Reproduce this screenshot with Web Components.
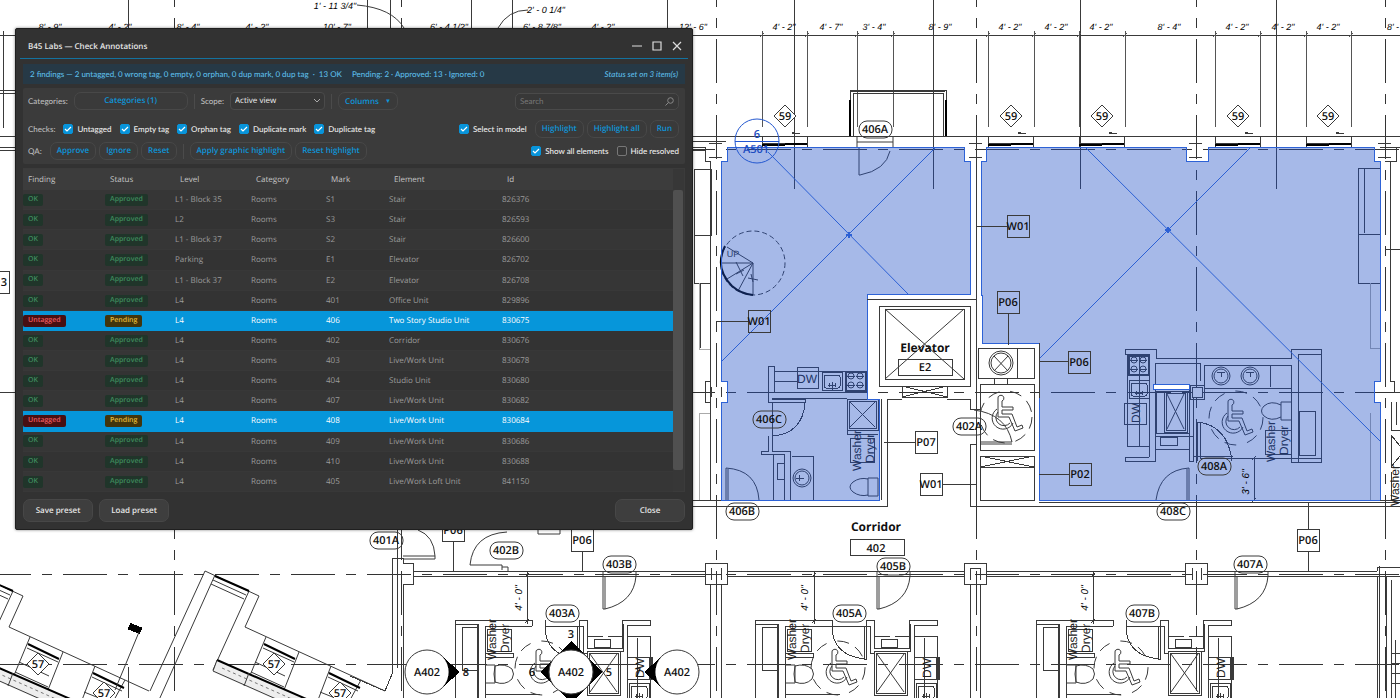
<!DOCTYPE html>
<html lang="en">
<head>
<meta charset="utf-8">
<title>B45 Labs — Check Annotations</title>
<style>
html,body{margin:0;height:100%;background:#fff;overflow:hidden}
body{font-family:"Open Sans","Noto Sans",sans-serif;text-rendering:geometricPrecision}
</style>
</head>
<body>
<plan-desktop>
  <floor-plan></floor-plan>
  <tool-window slot="window" heading="B45 Labs — Check Annotations">
    <status-strip>
      2 findings — 2 untagged, 0 wrong tag, 0 empty, 0 orphan, 0 dup mark, 0 dup tag &nbsp;·&nbsp; 13 OK
      <span slot="counts">Pending: 2 · Approved: 13 · Ignored: 0</span>
      <span slot="note">Status set on 3 item(s)</span>
    </status-strip>
    <filter-panel></filter-panel>
    <findings-table></findings-table>
    <push-button slot="footer" kind="solid">Save preset</push-button>
    <push-button slot="footer" kind="solid">Load preset</push-button>
    <push-button slot="close" kind="solid">Close</push-button>
  </tool-window>
</plan-desktop>
<script>
const define = (name, html, init) => customElements.define(name, class extends HTMLElement {
  connectedCallback() {
    if (this.shadowRoot) return;
    const root = this.attachShadow({ mode: 'open' });
    root.innerHTML = typeof html === 'function' ? html(this) : html;
    if (init) init(this, root);
  }
});

define('plan-desktop', `<style>
:host{display:block;position:relative;min-height:100vh;overflow:hidden;background:#fff}
.over{position:absolute;left:15px;top:28px;width:678px;max-width:calc(100% - 30px)}
</style><slot></slot><div class="over"><slot name="window"></slot></div>`);

define('tool-window', el => `<style>
:host{display:block}
.win{box-sizing:border-box;background:#323232;border:1px solid #1f1f1f;border-radius:2px;box-shadow:0 0 3px rgba(0,0,0,.5);color:#ddd}
header{display:flex;align-items:center;height:29px;margin:0 4px;padding:0 1px 0 8px;border-bottom:1px solid #14729f}
h1{flex:1;margin:0;font-size:8px;line-height:12px;font-weight:600;color:#e6e6e6;padding-top:6px}
.ctl{appearance:none;border:0;background:none;padding:0;width:20px;height:16px;margin-top:4px;display:grid;place-items:center;color:#ddd}
main{display:flex;flex-direction:column;gap:4px;padding:5px 7px 0}
footer{display:flex;gap:6px;padding:7px}
.grow{flex:1}
</style><section class="win">
<header><h1>${el.getAttribute('heading')}</h1>
<button class="ctl" aria-label="Minimize"><svg width="10" height="10"><path d="M0 5h10" stroke="currentColor"/></svg></button>
<button class="ctl" aria-label="Maximize"><svg width="10" height="10"><path d="M1 1h8v8h-8z" fill="none" stroke="currentColor" stroke-width="1.2"/></svg></button>
<button class="ctl" aria-label="Close window"><svg width="10" height="10"><path d="M1 1l8 8M9 1l-8 8" stroke="currentColor" stroke-width="1.2"/></svg></button>
</header>
<main><slot></slot></main>
<footer><slot name="footer"></slot><span class="grow"></span><slot name="close"></slot></footer></section>`);

define('status-strip', `<style>
:host{display:flex;align-items:center;height:20px;padding:0 7px;background:#263946;color:#5cbce6;font:500 8px/12px Lato,"Open Sans",sans-serif;white-space:nowrap}
.c{margin-left:10px;flex:1}.n{font-style:italic}
</style><span><slot></slot></span><span class="c"><slot name="counts"></slot></span><span class="n"><slot name="note"></slot></span>`);

define('push-button', `<style>
:host{display:block}
button{display:block;font:600 8px/12px "Open Sans","Noto Sans",sans-serif;text-rendering:inherit;box-sizing:border-box;height:18px;width:100%;padding:0 6px;border:1px solid #484848;border-radius:7px;background:#3a3a3a;color:#0d96da;white-space:nowrap}
:host([kind=solid]) button{height:23px;width:70px;padding:0;border-color:#474747;background:#3e3e3e;color:#e4e4e4}
</style><button type="button"><slot></slot></button>`);

define('check-box', el => `<style>
:host{display:block}
label{display:flex;align-items:center;gap:4px;font-size:8px;line-height:12px;color:#ececec;white-space:nowrap}
input{appearance:none;box-sizing:border-box;width:10px;height:10px;margin:0;border:1px solid #777;border-radius:2px;background:#383838;flex:none}
input:checked{border-color:#0894da;background:#0894da}
span.box{display:grid}.box>*{grid-area:1/1}svg{pointer-events:none}
input:not(:checked)+svg{display:none}
</style><label><span class="box"><input type="checkbox" ${el.hasAttribute('on') ? 'checked' : ''}><svg width="10" height="10"><path d="M2 5l2 2 4-4" fill="none" stroke="#fff" stroke-width="1.2"/></svg></span><span><slot></slot></span></label>`);

define('v-rule', `<style>:host{display:block;width:1px;height:15px;background:#4b4b4b}</style>`);

define('filter-panel', `<style>
:host{display:flex;flex-direction:column;gap:4px;background:#3b3b3b;border-radius:2px;padding:4px 6px 3px 5px;font:500 8px/12px Lato,"Open Sans",sans-serif;color:#bcbcbc;height:69px}
.row{display:flex;align-items:center;height:18px;white-space:nowrap}
.row.first{margin-bottom:6px}
.grow{flex:1}
.a{gap:6px}.b{gap:8px}.c{gap:3px}
.cat{width:114px}
.sel{position:relative;display:flex;align-items:center}
select{appearance:none;box-sizing:border-box;width:95px;height:18px;border:1px solid #4a4a4a;border-radius:4px;background:#373737;color:#f0f0f0;font:8px/12px "Open Sans","Noto Sans",sans-serif;text-rendering:inherit;padding:0 4px}
.sel svg{position:absolute;right:5px}
.search{box-sizing:border-box;display:flex;align-items:center;width:164px;height:17px;border:1px solid #4a4a4a;border-radius:5px;background:#383838;padding:0 4px;color:#777}
input{appearance:none;flex:1;min-width:0;border:0;padding:0;background:none;outline:none;font:8px/12px Lato,"Open Sans",sans-serif;text-rendering:inherit;color:#ddd}
input::placeholder{color:#777;opacity:1}
.tri{font-size:6px;margin-left:4px;vertical-align:1px}
</style>
<div class="row first a"><span>Categories:</span><push-button class="cat">Categories (1)</push-button><v-rule></v-rule>
<label for="scope">Scope:</label><span class="sel"><select id="scope"><option>Active view</option></select><svg width="6" height="4"><path d="M0 0l3 3 3-3" fill="none" stroke="#aaa"/></svg></span><v-rule></v-rule>
<push-button>Columns <span class="tri">▼</span></push-button><span class="grow"></span>
<span class="search"><input type="search" placeholder="Search" aria-label="Search"><svg width="9" height="9"><circle cx="5.500" cy="3.500" r="2.800" fill="none" stroke="#888"/><path d="M3.500 5.500L.5 8.500" stroke="#888"/></svg></span></div>
<div class="row b"><span>Checks:</span><check-box on>Untagged</check-box><check-box on>Empty tag</check-box><check-box on>Orphan tag</check-box><check-box on>Duplicate mark</check-box><check-box on>Duplicate tag</check-box><span class="grow"></span><check-box on>Select in model</check-box><div class="row c"><push-button>Highlight</push-button><push-button>Highlight all</push-button><push-button>Run</push-button></div></div>
<div class="row b"><span>QA:</span><div class="row a"><div class="row c"><push-button>Approve</push-button><push-button>Ignore</push-button><push-button>Reset</push-button></div><v-rule></v-rule><div class="row c"><push-button>Apply graphic highlight</push-button><push-button>Reset highlight</push-button></div></div><span class="grow"></span><check-box on>Show all elements</check-box><check-box>Hide resolved</check-box></div>`);

const findings = [
['L1 - Block 35','S1','Stair','826376'],['L2','S3','Stair','826593'],['L1 - Block 37','S2','Stair','826600'],
['Parking','E1','Elevator','826702'],['L1 - Block 37','E2','Elevator','826708'],['L4','401','Office Unit','829896'],
['L4','406','Two Story Studio Unit','830675',1],['L4','402','Corridor','830676'],['L4','403','Live/Work Unit','830678'],
['L4','404','Studio Unit','830680'],['L4','407','Live/Work Unit','830682'],['L4','408','Live/Work Unit','830684',1],
['L4','409','Live/Work Unit','830686'],['L4','410','Live/Work Unit','830688'],['L4','405','Live/Work Loft Unit','841150']];

define('findings-table', () => `<style>
:host{display:flex;border:1px solid #3b3b3b;border-left:0;background:#323232;height:322px}
table{flex:1;height:323px;border-collapse:collapse;table-layout:fixed;font-size:8px;line-height:12px;color:#9c9c9c}
th{height:21px;padding:0 0 0 5px;background:#3c3c3c;text-align:left;font-weight:400;color:#c6c6c6}
td{padding:0;white-space:nowrap}
tbody tr{background:#333;box-shadow:inset 0 -1px #383838}
tbody tr:nth-child(odd){background:#363636}
tbody tr.sel{background:#0696da;color:#fff;font-weight:500;box-shadow:none}
b{display:inline-block;vertical-align:middle;font-size:7px;line-height:12px;font-weight:600;padding:0 5px;border-radius:2px;background:#20352a;color:#3f8c5e}
.sel b{background:#470f12;color:#ee5b60}.sel td+td b{background:#42350c;color:#e6bd3a}
.bar{width:11px;background:#373737;padding-top:21px}
.thumb{width:10px;height:280px;background:#505050;border-radius:2px}
</style><table><colgroup><col width="82"><col width="70"><col width="76"><col width="75"><col width="63"><col width="113"><col></colgroup>
<thead><tr><th>Finding<th>Status<th>Level<th>Category<th>Mark<th>Element<th>Id</tr></thead>
<tbody>${findings.map(f => `<tr${f[4] ? ' class="sel"' : ''}><td><b>${f[4] ? 'Untagged' : 'OK'}</b><td><b>${f[4] ? 'Pending' : 'Approved'}</b><td>${f[0]}<td>Rooms<td>${f[1]}<td>${f[2]}<td>${f[3]}</tr>`).join('')}</tbody></table>
<div class="bar"><div class="thumb"></div></div>`);

/* ---- drawing helpers ---- */
const P = (d, c = '') => `<path d="${d}" class="${c}"/>`;
const R = (x, y, w, h, c = '') => `<rect x="${x}" y="${y}" width="${w}" height="${h}" class="${c}"/>`;
const C = (x, y, r, c = '') => `<circle cx="${x}" cy="${y}" r="${r}" class="${c}"/>`;
const T = (x, y, t, c = 't') => `<text x="${x}" y="${y}" class="${c}">${t}</text>`;
const V = (x, y, t, c = 'w') => `<text transform="translate(${x} ${y}) rotate(-90)" class="${c}">${t}</text>`;
const pill = (x, y, t) => `<rect x="${x - 16}" y="${y - 8}" width="33" height="17" rx="8" class="s"/>` + T(x, y + 4, t);
const box = (x, y, t) => R(x - 11, y - 11, 22, 22) + T(x, y + 4, t);
const gem = (x, y, t) => P(`M${x} ${y - 11}l11 11l-11 11l-11-11z`, 's wh') + T(x, y + 4, t);
const chair = (x, y) => `<g transform="translate(${x} ${y})" class="s">` +
  P('M-5-19a3 3 0 1 1 4 2l0 6h11v3h-11v4h10l5 13l5-2l1 3l-8 3l-6-14h-11v-18') +
  P('M-6-9a11 11 0 1 0 16 14M-5-6a8 8 0 1 0 12 11') + '</g>';
const ring = (x, y, r = 27) => `<circle cx="${x}" cy="${y}" r="${r}" class="s" stroke-dasharray="12 7 12 11"/>`;
const stove = (x, y) => R(x, y, 21, 20) + R(x + 1, y + 1, 19, 18) + [[6,5],[15,5],[6,14],[15,14]].map(p => C(x + p[0], y + p[1], 3, 's') + P(`M${x + p[0] - 4} ${y + p[1]}h8`)).join('');
const sink = (x, y) => R(x, y, 20, 18) + `<rect x="${x + 2}" y="${y + 3}" width="16" height="13" rx="2"/>` + P(`M${x + 10} ${y + 10}v8M${x + 6} ${y + 13}h8M${x + 7} ${y + 11}v4M${x + 13} ${y + 11}v4`);
const shower = (x, y, w, h) => R(x, y, w, h) + R(x + 2, y + 2, w - 4, h - 4) + P(`M${x + 3} ${y + 3}L${x + w - 3} ${y + h - 3}M${x + w - 3} ${y + 3}L${x + 3} ${y + h - 3}`, 's');

const dims = [[50,"8' - 9\""],[120,"4' - 2\""],[188,"8' - 4\""],[257,"4' - 2\""],[337,"10' - 7\""],[449,"6' - 4 1/2\""],[542,"6' - 8 7/8\""],[603,"4' - 2\""],[693,"12' - 6\""],[784,"4' - 2\""],[831,"4' - 7\""],[874,"3' - 4\""],[940,"8' - 9\""],[1010,"4' - 2\""],[1056,"4' - 2\""],[1101,"4' - 2\""],[1169,"8' - 4\""],[1237,"4' - 2\""],[1283,"4' - 2\""],[1328,"4' - 2\""],[1393,"8' -"]];
const ticks = [762,807,857,893,988,1034,1079,1125,1215,1260,1306,1351];

/* window wing of the angled block at the lower left */
const wing = dx => `<g transform="translate(${dx} 0)" class="s">` +
  P('M205 571L259 596L245 627L385 691M205 571L150 691M215 575L159 700M249 591L213 670M211 584L244 599M213 580L246 595M266 637L246 685M299 652L280 700M331 666L318 700M361 680L350 700') +
  P('M215 576L249 591M264 644L295 659M329 673L360 688', 'k') +
  P('M263 648L294 662M328 677L358 691M255 662L285 676M320 692L340 700M251 672L284 687') +
  P('M217 660L213 672L310 715L314 703z', 'band') + P('M217 660L320 705', 'k') + P('M222 668L310 707', 'd') +
  P('M213 671L310 714M217 660L213 671M249 673L244 686') + gem(274, 664, '57') + gem(340, 693, '57') + '</g>';

/* left half of a bathroom: closet, washer, toilet */
const bathL = dx => `<g transform="translate(${dx} 0)">` +
  P('M755 700V620H832V626M755 624H778V700M777 624V700M785 700V626H832M762 627H778M762 627V670H778M785 653H813V657H785M785 694H840') +
  R(787, 629, 24, 22) + P('M785 665h10v18h-10M795 666q-2 8 0 16q10 4 17-3q3-5 0-10q-7-6-17-3', 's') +
  V(796, 660, 'Washer') + V(809, 653, 'Dryer') + '</g>';
/* right half: door, shower, dishwasher */
const bathR = dx => `<g transform="translate(${dx} 0)">` +
  P('M832 620V626M866 626H870V653H874M864 626V659M866 626V659H864Q832 655 832 626H866V620H874V648H909V620H937V625H914V700M910 624V651H874M937 636V700M874 636H890M895 636H909M914 636H937M924 638V700') +
  R(881, 639, 16, 8) + shower(874, 651, 33, 44) + R(914, 657, 24, 22) + R(936, 657, 3, 22) + V(931, 678, 'DW') + sink(916, 683) + '</g>';

define('floor-plan', () => `<style>
:host{display:block;height:100vh;min-height:100%}
svg{display:block;width:100%;height:100%}
path,rect,circle{fill:none;stroke:#3a3a3a;stroke-width:1;shape-rendering:crispEdges}
.s,.s path,.s rect,.s circle{shape-rendering:auto}
.k{stroke:#000;stroke-width:2}
.g{stroke:#aaa}
.e{stroke:#555}
.dash{stroke-dasharray:5 3}
.band{fill:#eee;stroke:none}
.d{stroke:#777;stroke-dasharray:3 3}
.grid{stroke:#333;stroke-dasharray:44 11 10 11}
.room{fill:rgb(32,80,197);fill-opacity:.4;stroke:#2d62d6}
.x{stroke:#2c60d4;shape-rendering:auto}
.fill{fill:#000;stroke:none}
.wh{fill:#fff}
text{fill:#111;stroke:none;font:600 11px "Open Sans","Noto Sans",sans-serif;text-anchor:middle}
text.n{font:italic 9px "Liberation Sans",sans-serif;fill:#000}
text.v{font-size:10px}
text.up{font:9px "Liberation Sans",sans-serif;fill:#333}
text.w{font:12px "Liberation Sans",sans-serif;text-anchor:start;fill:#222}
text.r{font-weight:700;font-size:12px}
text.b{fill:#1c4cc0}
</style>
<svg viewBox="0 0 1400 698" preserveAspectRatio="xMinYMin slice" role="img" aria-label="Floor plan">
${[174,401,716,976,1196,1385].map(x => P(`M${x} -37V700`, 'grid')).join('')}
${[149,392,574,664].map(y => P(`M${y === 149 ? 671 : -13} ${y}H1400`, 'grid')).join('')}
${P('M0 35H1400M3 31V128M128 0V28M128 667V700M367 0V28M390 0V28M471 0V28M512 0V28M667 0V28M794 0V189M933 0V189M1080 0V189M1276 0V189')}
${P('M0 90H15M0 93H15M0 136H15M0 147H15M0 150H15M0 392H15')}
${P('M357 5Q392 8 404 28M498 28Q508 10 528 10', 's')}
${ticks.map(x => P(`M${x} 31V127M${x - 2} 37L${x + 2} 33`, 'e')).join('')}
${dims.map(d => T(d[0], 30, d[1], 'n')).join('')}
${T(335, 9, "1' - 11 3/4\"", 'n')}${T(546, 13, "2' - 0 1/4\"", 'n')}
${P('M692 136H1400M692 141H726')}${P('M692 147H705V161H710V500M692 150H705')}
${[762,988,1079,1215,1306].map(x => P(`M${x} 136V147M${x + 45} 136V147M${x} 147H${x + 45}M${x} 143H${x + 45}`) + P(`M${x} 145H${x + 23}M${x + 23} 144H${x + 45}`, 'k') + P(`M${x + 30} 133H${x + 38}M${x + 30} 133l3-1`)).join('')}
${[716,976,1196,1385].map(x => P(`M${x - 7} 143h13M${x - 7} 157h13`)).join('')}
${P('M850 136V90H946V136M853 136V93H943V136M851 91H945')}${P('M850 100V136M946 100V136', 'k')}
${P('M857 136V147M893 136V147M857 142H893M859 147V175H860Q886 170 890 151', 's')}
${R(694,169,17,66)}${P('M700 283H710M694 234V283H711M700 348V283')}${P('M699 283V349H710M699 500V413H710', 'g')}
${P('M710 381H705V402H710M711 387V397M721 387V397')}
<!-- 406 -->
${C(753,263,32,'s dash')}${P('M753 263L721 263M753 263L727 279M753 263L738 291M753 263L753 295M753 263L727 247', 's')}${P('M725 246Q714 268 732 286Q741 294 753 295', 'k s')}${P('M736 262l7 14M736 274l8-4M748 278l10 2M751 274l2 8','s')}${T(733,257,'UP','up')}
${P('M768 402V366H774V392M768 402H774M774 371H867M774 392H867M772 398H847M774 381H797')}
${R(797,367,21,21)}${T(797,383,'DW','w')}${sink(822,372)}${stove(845,371)}
${P('M772 399H805V402H772V436M805 402Q803 434 772 436M768 436V451H761V454H784V500M772 436V451H790V500M792 456H813V500M773 454V500')}
${shower(847,399,31,31)}${P('M847 430V434H878M879 412V500')}${P('M850 438H874V462H850z')}${V(861,471,'Washer')}${V(874,463,'Dryer')}
${R(777,463,7,16)}${C(802,478,9,'s')}${C(802,478,7,'s')}${P('M796 478h8M799 475v6')}
${P('M868 478h10v18h-10zM868 479q-8-2-15 3q-6 5 0 10q7 5 15 3','s')}
${P('M726 500V468Q757 470 759 500M728 469V500', 's')}
<!-- 408 -->
${P('M1039 361H1068M1125 355V349H1156V358H1291V349H1321V462H1291M1321 354H1298V462M1127 355H1149V358M1125 354H1149V457M1155 363V461H1125V457H1149M1156 363H1200V381M1321 458H1298M1204 365H1291V388H1204zM1291 365V462M1270 365V387')}
${stove(1128,355)}${P('M1127 355V446H1149')}${sink(1129,380)}${R(1124,403,22,21)}${V(1140,423,'DW')}${P('M1139 355V446')}
${R(1156,391,33,42)}${shower(1164,391,23,41)}${P('M1193 398V456H1233M1197 422V461M1189 390V456M1155 436H1193V461H1189V436M1155 449H1189')}
${R(1160,437,17,8)}${R(1190,385,14,14)}${R(1192,387,10,10)}
${[1221,1250].map(x => C(x,376,9,'s') + C(x,376,7,'s') + P(`M${x-4} 372h8M${x} 372v5`)).join('')}
${P('M1198 422Q1228 426 1232 461M1200 422V458H1321')}${R(1299,411,16,44)}${R(1265,430,26,24)}${V(1275,462,'Washer')}${V(1288,455,'Dryer')}
${P('M1291 402h-10v18h10M1281 405q-10-5-17 1q-5 5 0 10q7 6 17 1','s')}${chair(1233,422)}${ring(1236,418)}
${R(1358,168,22,66)}${P('M1364 168V233M1358 234V283H1380')}${P('M1370 283V348H1380M1370 413V500', 'g')}
${P('M1189 500V468Q1160 470 1156 500M1187 469V500','s')}
${P('M1254 458V500M1252 460l4-4M1252 502l4-4')}
<path class="room" d="M727 147H964V161H970V294H867V399H879V500H721V402H727V381H721V161H727z"/>
<path class="room" d="M986 147H1186V161H1208V147H1374V161H1380V381H1374V402H1380V500H1039V343H982V295H981V161H986z"/>
<path class="x" d="M768 152L908 294M936 147L721 362M1086 148L1380 441M1251 147L1039 359"/>
<path class="x" style="stroke-width:2" d="M846 235h6M849 232v6M1165 230h6M1168 227v6"/>
<rect x="1153" y="384" width="36" height="5" style="fill:#fff;stroke:#2d62d6"/>
<!-- lift core -->
${P('M867 299H976M976 147V500')}${R(879,306,91,80)}${R(885,309,79,70)}${P('M885 309L964 379M964 309L885 379','s')}
${P('M902 386H947V397H902zM902 386L947 397M947 386L902 397M887 399H902M947 399H970V409H981M887 399V506H692M881 500V399M692 500H721')}
${R(978,348,56,30)}${P('M1017 348V378M994 378V384M1007 378V384')}${C(1001,363,12,'s')}${C(1001,363,10,'s')}${P('M994 356L1008 371M1008 356L994 371','s')}
${R(980,384,54,66)}${R(980,456,54,44)}${P('M980 467H1034M980 456L1034 467M1034 456L980 467M976 444H970V506H1400M1039 502H1400M1039 398V343')}
${chair(1003,418)}${ring(1006,417,26)}${P('M974 410Q1006 414 1012 442H980M980 444H1012','s')}
${R(898,359,54,16)}${T(925,352,'Elevator','t r')}${T(925,371,'E2')}
${R(850,539,54,16)}${T(876,531,'Corridor','t r')}${T(876,552,'402')}
${P('M1380 147H1400M1385 161H1390V381M1396 147V161H1390M1390 283V235M1385 249H1400M1390 381H1394V392H1400M1391 402V430H1400M1391 435V467H1400M1391 435L1400 446M1391 467L1400 456M1391 472V500M1380 500H1400M1396 402V425')}
${V(1399,506,'Washer')}
<!-- lower band -->
${wing(-236)}${wing(0)}
<path class="k" style="stroke-width:7" d="M129 626L141 631"/>${P('M139 632L115 690','s')}
${P('M413 571H705M413 576H705M727 571H964M727 576H964M986 571H1185M986 576H1185M1207 571H1377M1207 576H1400')}
${P('M403 558H392V674L385 691M397 558V668M403 700V584H413V563H403V558M397 530V558M401 530V558M385 691L350 676')}
${[705,964,1185].map(x => R(x,563,22,21)).join('')}
${P('M711 568V580M721 568V580M711 574H721M970 568V580M980 568V580M970 568H980M1192 568V580M1201 568V580')}
${P('M710 584V700M721 584V700M970 584V700M980 584V700M1377 576V700M1379 566V700M1377 571V567H1400M1391 580V700M1395 640V700M1391 653H1400M1391 663H1400M1391 673H1400M1391 683H1400M1386 576V700')}
${P('M403 559H435V556H403M435 556Q434 536 418 530M470 565L502 565V570M470 565Q473 534 507 532M502 567H508V571M538 530V534H560V530', 's')}
${[[603,636],[877,910],[1235,1268]].map(([a,b]) => P(`M${a} 576V609H${a+2}V576M${a+2} 609Q${b-2} 602 ${b} 576M${a} 571V576M${b} 571V576`,'s')).join('')}
${[527,814,1093].map(x => P(`M${x} 572V624M${x-2} 577l4-4M${x-2} 623l4-4`)).join('')}
${V(522,598,"4' - 0\"",'n v')}${V(808,598,"4' - 0\"",'n v')}${V(1088,598,"4' - 0\"",'n v')}${V(1249,482,"3' - 6\"",'n v')}
${bathL(-300)}${bathL(0)}${bathL(281)}${bathR(-287)}${bathR(0)}${bathR(294)}
${[541,837,1120].map(x => chair(x,672) + ring(x+1,668)).join('')}
${P('M582 551V571M453 541V571M1308 502V529M1308 551V571M1039 474H1069M1039 361H1068M976 226H1007M716 321H748M884 442H915M942 484H976M1008 313V345')}
${gem(785,116,'59')}${gem(1011,116,'59')}${gem(1102,116,'59')}${gem(1238,116,'59')}${gem(1328,116,'59')}
${[[875,129,'406A'],[769,419,'406C'],[742,511,'406B'],[969,426,'402A'],[1214,466,'408A'],[1173,511,'408C'],[386,540,'401A'],[506,550,'402B'],[619,564,'403B'],[562,613,'403A'],[893,566,'405B'],[849,613,'405A'],[1250,564,'407A'],[1142,613,'407B']].map(a => pill(...a)).join('')}
${[[1018,226,'W01'],[759,321,'W01'],[1008,302,'P06'],[926,442,'P07'],[931,484,'W01'],[1079,362,'P06'],[1080,474,'P02'],[1308,540,'P06'],[582,540,'P06'],[453,530,'P06']].map(a => box(...a)).join('')}${R(-13,271,22,22)}${T(4,286,'3')}
<circle cx="757" cy="141" r="22" style="stroke:#2458d0;shape-rendering:auto"/><path d="M735 141h44" style="stroke:#2458d0"/>${T(757,138,'6','b')}${T(756,153,'A501','b')}
<path class="fill" d="M571 641l31 31l-31 31l-31-31z"/>
${C(427,672,22,'s wh')}${C(571,672,22,'s wh')}${C(677,672,22,'s wh')}
<path class="fill" d="M444 658q10 14 0 28l16-14zM660 658q-10 14 0 28l-16-14z"/>
${T(427,676,'A402')}${T(571,676,'A402')}${T(677,676,'A402')}${T(466,676,'8')}${T(532,676,'6')}${T(609,676,'5')}${T(638,676,'7')}${T(571,638,'3')}
</svg>`);
</script>
</body>
</html>
